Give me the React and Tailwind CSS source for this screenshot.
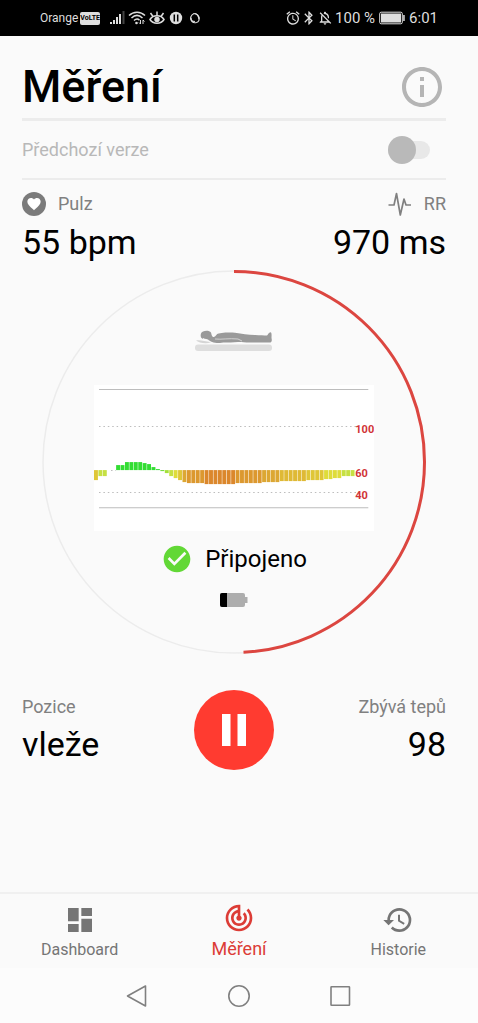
import React, { useState } from 'react';
import {
  MdAlarm,
  MdBluetooth,
  MdCheckCircle,
  MdDashboard,
  MdFavorite,
  MdHistory,
  MdInfoOutline,
  MdOutlineNotificationsOff,
  MdTrackChanges,
} from 'react-icons/md';

// Offset of each beat from the 60 bpm baseline, positive goes up
const BEATS = [
  -10, -6, -6, 0, 0, 5, 5, 8, 8, 8, 8, 7, 6, 3, 1, -1, -3, -6, -8, -10,
  -12, -13, -13, -13, -13, -14, -14, -14, -14, -14, -14, -14, -13, -13, -13, -13, -13, -13, -12, -12,
  -12, -12, -11, -11, -11, -11, -11, -11, -10, -10, -10, -10, -9, -9, -8, -8, -6, -6, -6,
];

const BAR_STEP = 4.42;

const barColor = (v) => {
  if (v > 0) return '#33dd33';
  if (v >= -1) return '#6fdc35';
  if (v >= -3) return '#a5e03a';
  if (v >= -6) return '#c6e043';
  if (v >= -9) return '#dfdc3a';
  if (v >= -10) return '#dfc637';
  if (v >= -11) return '#dfb935';
  if (v >= -12) return '#dca733';
  if (v >= -13) return '#dc982f';
  return '#db872c';
};

const StatusBar = () => (
  <div className="flex h-9 items-center justify-between bg-black px-10 text-[#dedede]">
    <div className="flex items-center">
      <span className="text-xs">Orange</span>
      <span className="ml-0.5 rounded-xs bg-[#dedede] text-[7px] leading-[13px] font-bold text-black">VoLTE</span>
      <svg className="ml-2.5 h-4 w-4" viewBox="0 0 16 16" fill="currentColor">
        <rect x="0" y="12" width="2" height="2" />
        <rect x="3" y="10" width="2" height="4" />
        <rect x="6" y="7" width="2" height="7" />
        <rect x="9" y="4" width="2" height="10" />
        <rect x="12.5" y="1" width="2" height="13" fill="#444" />
      </svg>
      <svg className="ml-0.5 h-4 w-[18px]" viewBox="0 0 18 16" fill="none" stroke="currentColor" strokeWidth="1.5">
        <path d="M1 5.5C5.500 1 12.500 1 17 5.500" />
        <path d="M3.500 8C7 4.700 11 4.700 14.500 8" />
        <path d="M6 10.500C8 8.700 10 8.700 11.500 10.200" />
        <circle cx="8.500" cy="13" r="1.300" fill="currentColor" stroke="none" />
        <path d="M12.500 10v4M11 12.500l1.500 1.500M15 14v-4M16.500 11.500L15 10" strokeWidth="1" />
      </svg>
      <svg className="ml-[3px] h-4 w-4" viewBox="0 0 16 16" fill="none" stroke="currentColor" strokeWidth="1.500">
        <path d="M1 9.500C4 4.500 12 4.500 15 9.500C12 14.500 4 14.500 1 9.500Z" />
        <circle cx="8" cy="9.500" r="2" fill="currentColor" />
        <path d="M8 5.500V1.500M4 6.500L1.500 3M12 6.500L14.500 3" />
      </svg>
      <svg className="ml-1 h-4 w-3.5" viewBox="0 0 14 16">
        <circle cx="7" cy="8" r="6.200" fill="currentColor" />
        <path d="M5.300 4.500v7M8.700 4.500v7" stroke="#000" strokeWidth="1.500" />
      </svg>
      <svg className="ml-1.5 h-4 w-3" viewBox="0 0 12 16" fill="none" stroke="currentColor" strokeWidth="1.200">
        <path d="M3.500 11.500C0 8.500 2 5 5 3.500C8 3.500 10.500 6 10 9" />
        <path d="M6 3.500C10 5 12 11 7.500 12.500C4 13.500 1.500 11 2 8M3 11l3 .5" />
      </svg>
    </div>
    <div className="flex items-center">
      <MdAlarm className="h-4 w-4" />
      <MdBluetooth className="h-4 w-4" />
      <MdOutlineNotificationsOff className="h-4 w-4" />
      <span className="ml-0.5 text-[15px]">100 %</span>
      <svg className="ml-1 h-3.5 w-[26px]" viewBox="0 0 26 14">
        <rect x="0.700" y="1.200" width="22.600" height="11.600" rx="1.500" fill="none" stroke="currentColor" strokeWidth="1" />
        <rect x="2" y="2.500" width="20" height="9" fill="currentColor" />
        <rect x="24.200" y="4" width="1.500" height="6" fill="currentColor" />
      </svg>
      <span className="ml-1 text-[15px]">6:01</span>
    </div>
  </div>
);

const LyingFigure = () => (
  <svg className="h-6 w-[78px]" viewBox="0 0 78 24">
    <rect x="0" y="15.500" width="77" height="6.500" rx="3" fill="#dedede" />
    <path d="M1 11.500C5 10.500 9 12 16 13.300C11 15 4 14 1 11.500Z" fill="#d5d5d5" />
    <path
      d="M6 4.500C7 1.500 14 0.800 16 3.500C16.800 5.500 16.300 6.800 18 8C19.500 8.500 20.500 7 22 5.300C24 3.800 33 3.300 40 3.800C47 4.800 53 5.800 60 6C65 6.200 69 6.500 72 6.500C73 5.500 74 3 75.500 3.200C77 3.600 76.500 7 76.500 9C77 11 77 13 75.500 13.500H55C49 13.300 46 12.800 43 13C36 14 30 12.800 25 14C20 14.500 15 12.500 13 10.500C11 9.500 8 10.300 6.500 9C5.500 8 5.500 6 6 4.500Z"
      fill="#9a9a9a"
    />
    <path d="M20 10C26 10.800 34 9 43 10L47 12" fill="none" stroke="#dedede" strokeWidth="0.800" />
  </svg>
);

const HeartRateChart = () => (
  <svg className="w-full bg-white" viewBox="0 0 280 146">
    <g stroke="#bdbdbd">
      <path d="M5 4.500h269M5 122.500h269" />
      <path d="M5 41.500h257M5 107.500h257M17 85.500h5" strokeDasharray="1.500 2.900" />
    </g>
    {BEATS.map((v, i) => (
      <rect
        key={i}
        x={i * BAR_STEP}
        y={v > 0 ? 85 - v : 85}
        width="3.900"
        height={Math.abs(v)}
        fill={barColor(v)}
      />
    ))}
    <g fill="#d13438" fontSize="11" fontWeight="700">
      <text x="261" y="48">100</text>
      <text x="261" y="92">60</text>
      <text x="261" y="114">40</text>
    </g>
  </svg>
);

const ProgressRing = () => (
  <svg className="col-start-1 row-start-1 w-full" viewBox="0 0 384 384" fill="none">
    <circle cx="192" cy="192" r="191" stroke="#ececec" strokeWidth="1.500" />
    <circle
      cx="192"
      cy="192"
      r="190.500"
      stroke="#dc4640"
      strokeWidth="3"
      pathLength="1000"
      strokeDasharray="492 508"
      transform="rotate(-90 192 192)"
    />
  </svg>
);

const TABS = [
  { label: 'Dashboard', Icon: MdDashboard },
  { label: 'Měření', Icon: MdTrackChanges, active: true },
  { label: 'Historie', Icon: MdHistory },
];

const TabBar = () => (
  <nav className="grid grid-cols-3 border-t-2 border-[#f0f0f0] pb-1">
    {TABS.map(({ label, Icon, active }) => (
      <a
        key={label}
        href="#"
        className={`flex flex-col items-center ${active ? 'pt-2 text-lg/[30px] text-[#dc3c36]' : 'pt-2.5 text-base/7 text-[#757575]'}`}
      >
        <Icon className="h-8 w-8" />
        <span>{label}</span>
      </a>
    ))}
  </nav>
);

const SystemNav = () => (
  <div className="flex h-[55px] items-center justify-center gap-[78px] bg-[#fcfcfc] text-[#808080]">
    <button aria-label="Zpět">
      <svg className="h-6 w-6" viewBox="0 0 24 24" fill="none" stroke="currentColor" strokeWidth="1.600" strokeLinejoin="round">
        <path d="M20.500 2v20L2.500 12Z" />
      </svg>
    </button>
    <button aria-label="Domů">
      <svg className="h-6 w-6" viewBox="0 0 24 24" fill="none" stroke="currentColor" strokeWidth="1.600">
        <circle cx="12" cy="12" r="10.200" />
      </svg>
    </button>
    <button aria-label="Poslední aplikace">
      <svg className="h-6 w-6" viewBox="0 0 24 24" fill="none" stroke="currentColor" strokeWidth="1.600">
        <rect x="2" y="2.800" width="18.500" height="18.500" rx="0.500" />
      </svg>
    </button>
  </div>
);

const App = () => {
  const [previous, setPrevious] = useState(false);

  return (
    <div className="flex min-h-screen flex-col bg-[#fafafa] font-[Roboto,sans-serif] text-black">
      <StatusBar />

      <main className="flex-1 pr-8 pl-[22px]">
        <header className="flex items-center justify-between border-b-3 border-[#ececec] pt-6 pb-1">
          <h1 className="text-[45px]/[54px] font-medium">Měření</h1>
          <button aria-label="Informace" className="text-[#b5b5b5]">
            <MdInfoOutline className="h-12 w-12" />
          </button>
        </header>

        <div className="flex h-[59px] items-center justify-between border-b-2 border-[#ececec] pr-4 text-[#b8b8b8]">
          <label htmlFor="previous" className="text-lg">Předchozí verze</label>
          <input
            id="previous"
            type="checkbox"
            role="switch"
            checked={previous}
            onChange={() => setPrevious(!previous)}
            className="h-[18px] w-[42px] appearance-none rounded-full bg-[#e8e8e8] before:-mt-[5px] before:block before:h-7 before:w-7 before:rounded-full before:bg-[#b9b9b9] checked:before:ml-auto"
          />
        </div>

        <section className="flex justify-between pt-3">
          <div>
            <div className="flex h-6 items-center gap-3 text-lg text-[#808080]">
              <span className="flex h-6 w-6 items-center justify-center rounded-full bg-[#7b7b7b] text-white">
                <MdFavorite className="h-4 w-4" />
              </span>
              Pulz
            </div>
            <p className="mt-1 text-[34px]/11">55 bpm</p>
          </div>
          <div className="text-right">
            <div className="flex h-6 items-center justify-end gap-3 text-lg text-[#808080]">
              <svg className="h-6 w-6" viewBox="0 0 24 24" fill="none" stroke="currentColor" strokeWidth="1.700" strokeLinejoin="round">
                <path d="M0.500 13h5.500L8.500 1.500L12.300 23L16 7L18 13H23" />
              </svg>
              RR
            </div>
            <p className="mt-1 text-[34px]/11">970 ms</p>
          </div>
        </section>

        <section className="mx-auto mt-1.5 grid max-w-[384px] place-items-center">
          <ProgressRing />
          <div className="col-start-1 row-start-1 flex w-[73%] flex-col items-center pt-3">
            <LyingFigure />
            <div className="mt-8 w-full">
              <HeartRateChart />
            </div>
            <div className="mt-3 flex items-center gap-3 text-2xl/8">
              <MdCheckCircle className="h-8 w-8 text-[#62d836]" />
              Připojeno
            </div>
            <svg className="mt-[18px] h-3.5 w-7" viewBox="0 0 28 14">
              <path d="M2 0H23q2 0 2 2V4h2.500v6H25v2q0 2 -2 2H2q-2 0 -2 -2V2q0 -2 2 -2Z" fill="#adadad" />
              <path d="M2 0H7V14H2q-2 0 -2 -2V2q0 -2 2 -2Z" fill="#000" />
            </svg>
          </div>
        </section>

        <section className="mt-9 grid grid-cols-[1fr_auto_1fr] items-center">
          <div>
            <p className="text-lg/7 text-[#808080]">Pozice</p>
            <p className="text-[34px]/[46px]">vleže</p>
          </div>
          <button aria-label="Pozastavit" className="flex h-20 w-20 items-center justify-center rounded-full bg-[#ff3b30] text-white">
            <svg className="h-8 w-6" viewBox="0 0 24 32" fill="currentColor">
              <rect width="8.500" height="32" />
              <rect x="15.500" width="8.500" height="32" />
            </svg>
          </button>
          <div className="text-right">
            <p className="text-lg/7 text-[#808080]">Zbývá tepů</p>
            <p className="text-[34px]/[46px]">98</p>
          </div>
        </section>
      </main>

      <TabBar />
      <SystemNav />
    </div>
  );
};

export default App;
